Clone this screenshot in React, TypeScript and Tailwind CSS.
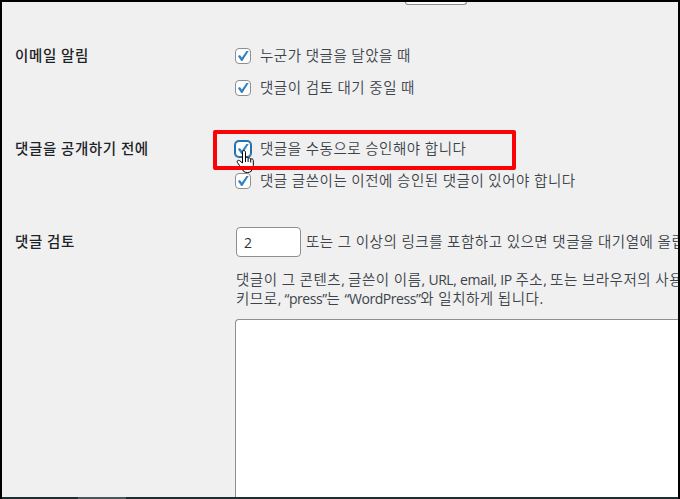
import React from "react";

const Checkbox = ({ focused = false }: { focused?: boolean }) => (
  <span
    className={
      focused
        ? "flex size-4 shrink-0 items-center justify-center rounded-[4px] border border-[#2271b1] bg-white ring-1 ring-[#2271b1]"
        : "flex size-4 shrink-0 items-center justify-center rounded-[4px] border border-[#8c8f94] bg-white"
    }
  >
    <svg viewBox="0 0 14 14" className="size-[14px]">
      <path
        d="M1.9 6.9 L3.9 5.9 L5.9 8.6 L10.4 2.1 L12.7 2.1 L6.4 12 L5.2 12 Z"
        fill="#3582c4"
      />
    </svg>
  </span>
);

const Option = ({ text, focused }: { text: string; focused?: boolean }) => (
  <label className="flex h-5 items-center gap-[9px] whitespace-nowrap">
    <Checkbox focused={focused} />
    <span className="-mt-0.5">{text}</span>
  </label>
);

const Latin = ({ children }: { children: React.ReactNode }) => (
  <span className="font-['Open_Sans'] text-[14px] leading-none font-normal tracking-[-0.45px] [word-spacing:0.5px]">
    {children}
  </span>
);

const Row = ({
  title,
  className,
  children,
}: {
  title: string;
  className: string;
  children: React.ReactNode;
}) => (
  <section className={className}>
    <h3 className="w-[220px] shrink-0 text-[14.5px] leading-5 font-medium tracking-[0.6px] text-[#1d2327]">
      {title}
    </h3>
    <div className="min-w-0 flex-1">{children}</div>
  </section>
);

const HandCursor = () => (
  <svg
    viewBox="0 0 18 24"
    className="absolute top-[147px] left-[234px] h-6 w-[18px]"
  >
    <path
      d="M6.5 14 V3.2 C6.5 1 9.5 1 9.5 3.2 V9 C9.8 7.7 12 7.8 12.1 9.4 C12.6 8.4 14.6 8.6 14.7 10.3 C15.5 9.5 17.3 9.9 17.3 11.5 V16.5 C17.3 19 15.6 20 15.3 22.2 C13.4 24 9.3 24 7.4 22.2 C6.8 19.9 4.5 18.8 3.5 16.5 L1.4 13.4 C0.5 11.8 2.3 10.7 3.6 11.7 Z"
      fill="#fff"
      stroke="#000"
      strokeWidth="1"
      strokeLinejoin="round"
    />
    <path
      d="M9.5 8.5 V13 M12.1 9.3 V13 M14.7 10.3 V13.5"
      fill="none"
      stroke="#000"
      strokeWidth="1"
    />
  </svg>
);

const App = () => {
  return (
    <main className="relative flex h-[499px] w-[680px] flex-col overflow-hidden border-x-2 border-t-2 border-black bg-[#f0f0f0] font-['Noto_Sans_CJK_KR',sans-serif] text-[14.5px] font-[350] tracking-[0.53px] text-[#3c434a] [word-spacing:0.3px]">
      <div className="ml-[403px] h-[3px] w-[62px] shrink-0 rounded-b-[4px] border border-t-0 border-[#8c8f94] bg-white" />

      <Row title="이메일 알림" className="mt-10 ml-[13px] flex shrink-0">
        <div className="flex flex-col gap-3 pt-px">
          <Option text="누군가 댓글을 달았을 때" />
          <Option text="댓글이 검토 대기 중일 때" />
        </div>
      </Row>

      <Row title="댓글을 공개하기 전에" className="mt-10 ml-[13px] flex shrink-0">
        <div className="flex flex-col gap-3 pt-px">
          <Option text="댓글을 수동으로 승인해야 합니다" focused />
          <Option text="댓글 글쓴이는 이전에 승인된 댓글이 있어야 합니다" />
        </div>
      </Row>

      <Row
        title="댓글 검토"
        className="mt-9 -mr-20 ml-[13px] flex min-h-0 flex-1 *:first:mt-1"
      >
        <div className="flex h-full flex-col">
          <div className="ml-px flex items-center gap-[5px] whitespace-nowrap">
            <div className="flex h-[30px] w-[65px] items-center rounded-[4px] border border-[#8c8f94] bg-white px-[7px] font-['Open_Sans'] text-[14px] font-normal text-[#2c3338]">
              2
            </div>
            <span className="-mt-0.5">
              또는 그 이상의 링크를 포함하고 있으면 댓글을 대기열에 올립니다
            </span>
          </div>
          <p className="mt-3 ml-px h-[38px] leading-[19px] whitespace-nowrap">
            댓글이 그 콘텐츠<Latin>, </Latin>글쓴이 이름
            <Latin>, URL, email, IP </Latin>주소<Latin>, </Latin>
            또는 브라우저의 사용자
            <br />
            키므로<Latin>, “press”</Latin>는 <Latin>“WordPress”</Latin>와
            일치하게 됩니다<Latin>.</Latin>
          </p>
          <div className="mt-3 min-h-0 flex-1 rounded-tl-[4px] border-t border-l border-[#8c8f94] bg-white" />
        </div>
      </Row>

      <footer className="h-0.5 shrink-0 bg-[#1f2e2e]">
        <div className="ml-[76px] h-full w-12 bg-[#4c5858]" />
      </footer>

      <HandCursor />
      <div className="absolute top-32 left-[211px] h-10 w-[303px] rounded-[2px] border-4 border-[#fb0207]" />
    </main>
  );
};

export default App;
